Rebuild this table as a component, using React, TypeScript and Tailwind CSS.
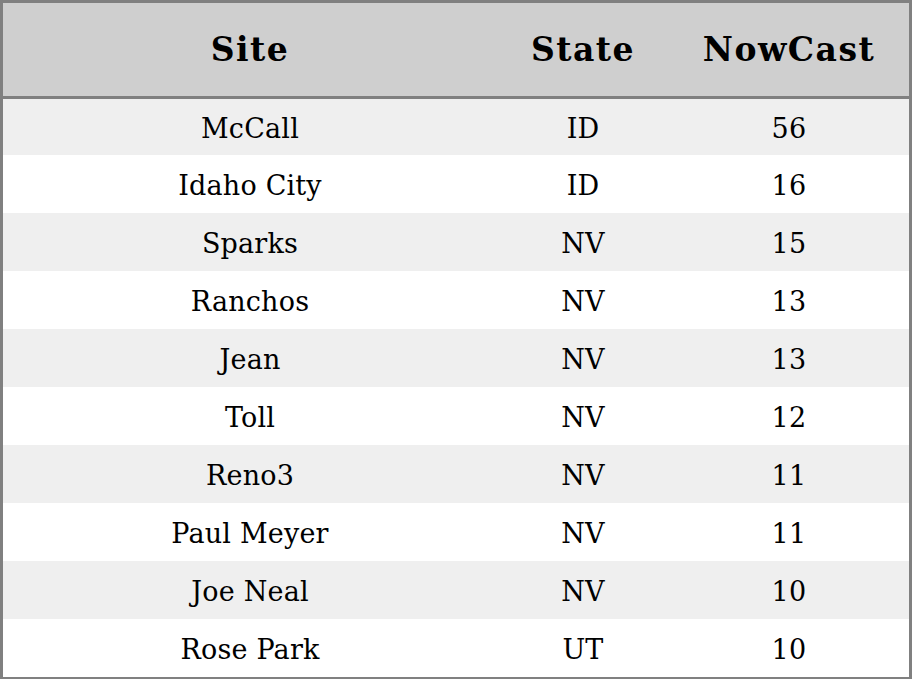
const rows = [
  ['McCall', 'ID', '56'],
  ['Idaho City', 'ID', '16'],
  ['Sparks', 'NV', '15'],
  ['Ranchos', 'NV', '13'],
  ['Jean', 'NV', '13'],
  ['Toll', 'NV', '12'],
  ['Reno3', 'NV', '11'],
  ['Paul Meyer', 'NV', '11'],
  ['Joe Neal', 'NV', '10'],
  ['Rose Park', 'UT', '10'],
];

export default function App() {
  return (
    <div
      className="w-[912px] h-[679px] bg-white border-[3px] border-b-2 border-[#808080] text-black flex flex-col overflow-hidden"
      style={{ fontFamily: '"DejaVu Serif", serif' }}
    >
      <div className="flex h-[96px] shrink-0 bg-[#cfcfcf] border-b-[3px] border-[#808080] text-[33px] font-bold tracking-[1.5px] pt-[1px]">
        <div className="w-[494px] flex items-center justify-center">Site</div>
        <div className="w-[172px] flex items-center justify-center">State</div>
        <div className="flex-1 flex items-center justify-center">NowCast</div>
      </div>
      {rows.map((r, i) => (
        <div
          key={i}
          className={`flex shrink-0 text-[27px] tracking-[0.2px] pt-[4px] ${i === 0 ? 'h-[56px]' : 'h-[58px]'} ${
            i % 2 === 0 ? 'bg-[#efefef]' : 'bg-white'
          }`}
        >
          <div className="w-[494px] flex items-center justify-center">{r[0]}</div>
          <div className="w-[172px] flex items-center justify-center">{r[1]}</div>
          <div className="flex-1 flex items-center justify-center">{r[2]}</div>
        </div>
      ))}
    </div>
  );
}
